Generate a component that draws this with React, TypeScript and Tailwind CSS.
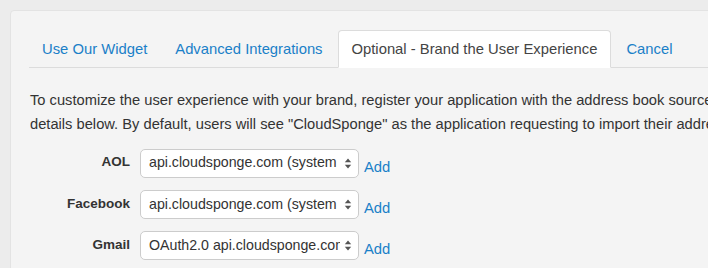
const tabs = [
  { label: 'Use Our Widget', active: false },
  { label: 'Advanced Integrations', active: false },
  { label: 'Optional - Brand the User Experience', active: true },
  { label: 'Cancel', active: false },
];

const sources = [
  { name: 'AOL', value: 'api.cloudsponge.com (system default)' },
  { name: 'Facebook', value: 'api.cloudsponge.com (system default)' },
  { name: 'Gmail', value: 'OAuth2.0 api.cloudsponge.com (system default)' },
];

const SelectArrows = () => (
  <svg width="8" height="13" viewBox="0 0 8 13" className="shrink-0">
    <path d="M4 1.5 L7.2 5.2 L0.8 5.2 Z" fill="#555" />
    <path d="M4 11.5 L7.2 7.8 L0.8 7.8 Z" fill="#555" />
  </svg>
);

export default function App() {
  return (
    <div
      className="w-[708px] h-[268px] overflow-hidden bg-[#ececec] pl-[10px] pt-[10px]"
      style={{ fontFamily: '"Liberation Sans", Arial, sans-serif' }}
    >
      <div className="w-[780px] h-[300px] bg-[#f4f4f4] border border-[#e3e3e3] rounded-tl-[4px] pl-[18px] pt-[19px]">
        {/* Tabs */}
        <ul className="flex border-b border-[#dcdcdc] h-[38px]">
          {tabs.map((t) => (
            <li
              key={t.label}
              className={
                t.active
                  ? 'mr-[2px] -mb-px px-[13px] pt-px flex items-center bg-white border border-[#dcdcdc] border-b-white rounded-t-[4px] text-[14.8px] text-[#444]'
                  : 'mr-[2px] px-[12px] pt-px flex items-center border border-transparent text-[14.8px] text-[#1a80c8]'
              }
            >
              {t.label}
            </li>
          ))}
        </ul>

        {/* Intro */}
        <p className="mt-[20px] text-[14.7px] leading-[24px] text-[#333] whitespace-nowrap pl-px">
          To customize the user experience with your brand, register your application with the address book sources and enter the
          <br />
          details below. By default, users will see "CloudSponge" as the application requesting to import their address book.
        </p>

        {/* Source rows */}
        <div className="mt-[12px] flex flex-col gap-[11px]">
          {sources.map((s) => (
            <div key={s.name} className="flex items-center">
              <label className="w-[101px] text-right font-bold text-[13.5px] text-[#333] -mt-px">{s.name}</label>
              <div className="ml-[10px] w-[219px] h-[29px] bg-white border border-[#cccccc] rounded-[5px] flex items-center pl-[8px] pr-[6px]">
                <span className="w-[191px] overflow-hidden whitespace-nowrap text-[14.2px] text-[#333]">{s.value}</span>
                <span className="flex-1" />
                <SelectArrows />
              </div>
              <a className="ml-[5px] mt-[8px] text-[14.8px] text-[#1a80c8]">Add</a>
            </div>
          ))}
        </div>
      </div>
    </div>
  );
}
